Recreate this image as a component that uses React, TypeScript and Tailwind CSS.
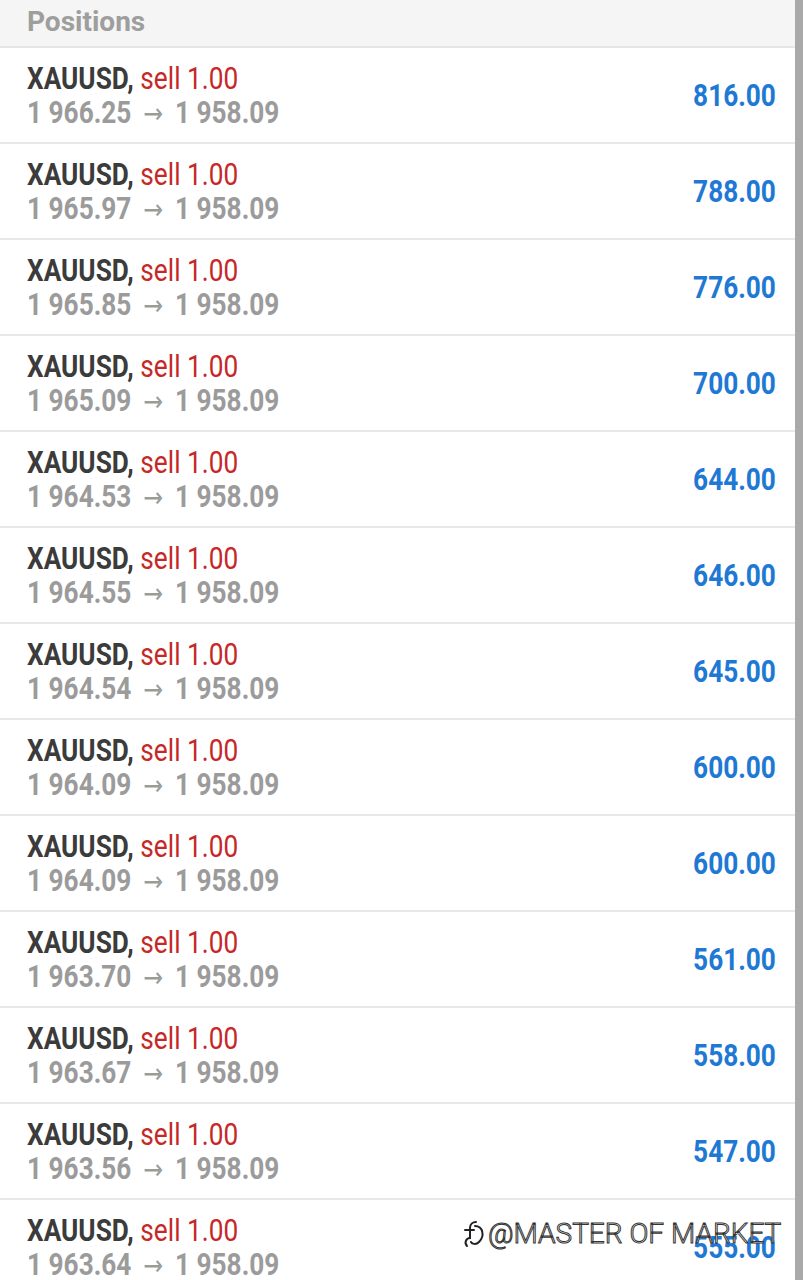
import React from "react";

const rows = [
  ["1 966.25", "816.00"],
  ["1 965.97", "788.00"],
  ["1 965.85", "776.00"],
  ["1 965.09", "700.00"],
  ["1 964.53", "644.00"],
  ["1 964.55", "646.00"],
  ["1 964.54", "645.00"],
  ["1 964.09", "600.00"],
  ["1 964.09", "600.00"],
  ["1 963.70", "561.00"],
  ["1 963.67", "558.00"],
  ["1 963.56", "547.00"],
  ["1 963.64", "555.00"],
];

export default function App() {
  return (
    <div className="relative flex h-[1280px] w-[803px] overflow-hidden bg-white [font-family:Roboto,'Liberation_Sans',sans-serif]">
      <div className="flex-1 flex flex-col">
        <div className="h-[48px] shrink-0 bg-[#f5f5f5] border-b-2 border-[#e6e6e6] flex items-start pt-[8px] pl-[27px]">
          <span className="text-[28px] font-bold text-[#9e9e9e] leading-none whitespace-nowrap">
            Positions
          </span>
        </div>
        {rows.map(([open, profit], i) => (
          <div
            key={i}
            className="h-[96px] shrink-0 border-b-2 border-[#e8e8e8] flex items-center justify-between pl-[27px] pr-[19px]"
          >
            <div className="flex flex-col pt-[2px]">
              <div className="h-[34px] leading-[34px] text-[31px] whitespace-nowrap">
                <span className="inline-block origin-left scale-x-[0.846]">
                  <span className="font-bold text-[#3b3b3b]">XAUUSD,</span>{" "}
                  <span className="text-[#c62828]">sell 1.00</span>
                </span>
              </div>
              <div className="h-[34px] leading-[34px] text-[31px] font-bold text-[#9b9b9b] whitespace-nowrap">
                <span className="inline-block origin-left scale-x-[0.846]">
                  {open}
                  <span className="inline-block mx-[14px] text-[28px] font-normal [font-family:'DejaVu_Sans',sans-serif]">→</span>
                  1 958.09
                </span>
              </div>
            </div>
            <span className="inline-block origin-right scale-x-[0.846] text-[31px] font-bold text-[#1e78d4] leading-none">
              {profit}
            </span>
          </div>
        ))}
      </div>
      <div className="w-[8px] shrink-0 bg-[#a9a9a9]" />
      <div className="absolute left-[462px] top-[1219px] flex items-center gap-[2px] pointer-events-none whitespace-nowrap">
        <svg width="24" height="30" viewBox="0 0 24 30" fill="none" stroke="#222" strokeWidth="2" strokeLinecap="round">
          <path d="M5 27 C2 24 4 19 8 19 L8 9 C8 5 11 3 14 3" />
          <path d="M3 11 L12 11" />
          <path d="M13 7 C21 7 23 17 17 23 C14 26 10 25 9 23" />
        </svg>
        <span className="text-[28px] font-light text-white leading-none [-webkit-text-stroke:1px_#333]">
          @MASTER OF MARKET
        </span>
      </div>
    </div>
  );
}
